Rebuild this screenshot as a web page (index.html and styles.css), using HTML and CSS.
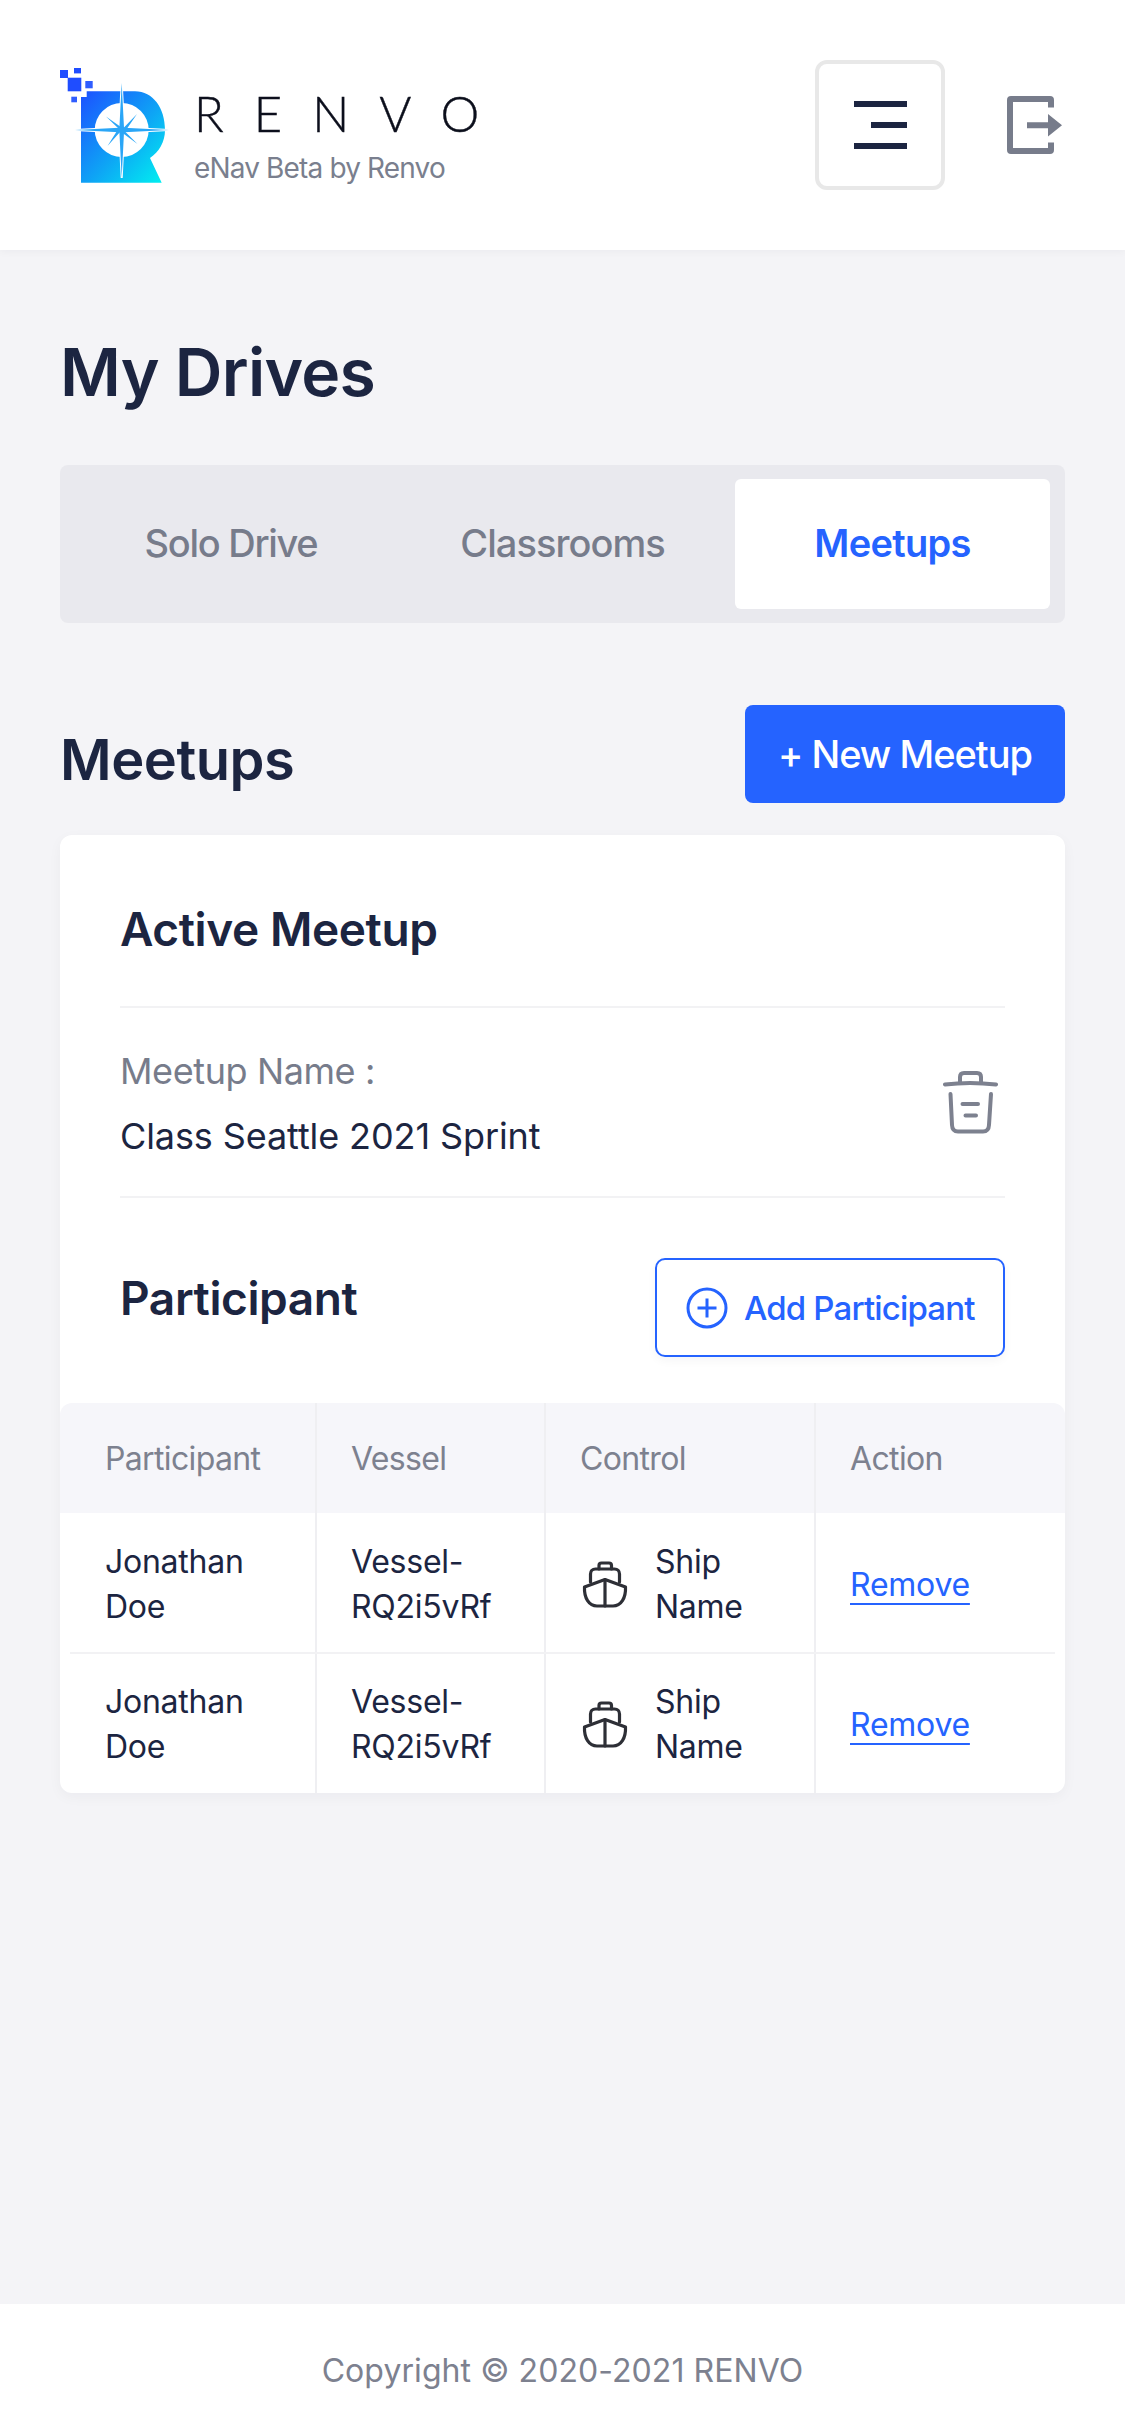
FILE: index.html
```html
<!DOCTYPE html>
<html lang="en">
<head>
<meta charset="utf-8">
<title>My Drives</title>
<link rel="stylesheet" href="styles.css">
</head>
<body>
<header class="topbar">
  <div class="brand">
    <svg class="logo" viewBox="56 64 124 124" aria-hidden="true">
      <defs>
        <linearGradient id="rg" x1="0" y1="0" x2="1" y2="1">
          <stop offset="0" stop-color="#1c50ff"/>
          <stop offset="0.55" stop-color="#0ea5f5"/>
          <stop offset="1" stop-color="#00f2f0"/>
        </linearGradient>
      </defs>
      <g fill="#1f4dff">
        <rect x="60" y="70" width="8" height="8"/>
        <rect x="74" y="68" width="7" height="5.4"/>
        <rect x="67.7" y="77.7" width="13.6" height="13.6"/>
        <rect x="85.3" y="81" width="7.4" height="7.3" fill="#2f5dff"/>
        <rect x="71.3" y="96.7" width="5.7" height="5.6" fill="#2f5dff"/>
      </g>
      <path fill="url(#rg)" d="M81 97H86.7V91.3H135C153 91.3 165 108 165 130C165 142 159 152 150 158L161.7 182.7H81Z"/>
      <circle cx="121.7" cy="130" r="27" fill="#fff"/>
      <path fill="#fff" stroke="#fff" stroke-width="2" d="M121.7 83L124 127.700L169 130L124 132.300L121.700 178L119.400 132.300L75 130L119.400 127.700Z"/>
      <path fill="#2aa6f7" d="M121.7 83L124 127.700L169 130L124 132.300L121.700 178L119.400 132.300L75 130L119.400 127.700Z"/>
      <path fill="#2aa6f7" d="M106 116.500L123 128.500L137 114L125 131.500L137.500 144L120.500 131.500L107.500 146L118.500 128.500Z"/>
    </svg>
    <div class="brand-text">
      <div class="wordmark">RENVO</div>
      <div class="tagline">eNav Beta by Renvo</div>
    </div>
  </div>
  <div class="top-actions">
    <button class="menu-btn" type="button" aria-label="Menu">
      <span class="bar"></span>
      <span class="bar bar-short"></span>
      <span class="bar"></span>
    </button>
    <svg class="logout" viewBox="0 0 55 59" aria-hidden="true">
      <path d="M44 11.500V4a1 1 0 0 0-1-1H4a1 1 0 0 0-1 1V54a1 1 0 0 0 1 1H43a1 1 0 0 0 1-1V46.500" fill="none" stroke="#777c8b" stroke-width="6"/>
      <path d="M20 26.200H41V18L55 29.200L41 40.400V32.200H20Z" fill="#777c8b"/>
    </svg>
  </div>
</header>

<main class="content">
  <h1 class="page-title">My Drives</h1>
  <nav class="tabs">
    <a class="tab tab-solo">Solo Drive</a>
    <a class="tab">Classrooms</a>
    <a class="tab tab-active">Meetups</a>
  </nav>

  <div class="section-head">
    <h2 class="section-title">Meetups</h2>
    <button class="primary-btn" type="button">+ New Meetup</button>
  </div>

  <section class="card">
    <div class="card-body">
      <h3 class="card-title active-title">Active Meetup</h3>
      <div class="meetup-row">
        <div class="meetup-info">
          <div class="meetup-label">Meetup Name :</div>
          <div class="meetup-name">Class Seattle 2021 Sprint</div>
        </div>
        <svg class="trash" viewBox="0 0 56 63" aria-hidden="true">
          <g fill="none" stroke="#7d818f" stroke-width="4" stroke-linecap="round" stroke-linejoin="round">
            <path d="M3 13.500C19 11.500 37 11.500 54 13.500"/>
            <path d="M18 11V6C18 3 19.500 2 22 2H35C37.500 2 39 3 39 6V11"/>
            <path d="M8.500 23L10 54C10.200 58.500 12.500 60.500 16 60.500H41C44.500 60.500 46.800 58.500 47 54L49 23"/>
            <path d="M20.500 33H36M23.500 44.500H34"/>
          </g>
        </svg>
      </div>
      <div class="participant-head">
        <h3 class="card-title">Participant</h3>
        <button class="outline-btn" type="button">
          <svg class="plus" viewBox="0 0 42 42" aria-hidden="true">
            <circle cx="21" cy="21" r="19" fill="none" stroke="#2563ff" stroke-width="3"/>
            <path d="M21 11.500V30.500M11.500 21H30.500" stroke="#2563ff" stroke-width="3"/>
          </svg>
          Add Participant
        </button>
      </div>
    </div>

    <div class="table">
      <div class="t-row t-head">
        <div class="cell">Participant</div>
        <div class="cell">Vessel</div>
        <div class="cell">Control</div>
        <div class="cell">Action</div>
      </div>
      <div class="t-row t-data">
        <div class="cell">Jonathan<br>Doe</div>
        <div class="cell">Vessel-<br>RQ2i5vRf</div>
        <div class="cell control">
          <svg class="ship" viewBox="0 0 46 47" aria-hidden="true">
            <g fill="none" stroke="#2d2f36" stroke-width="3.200" stroke-linecap="round" stroke-linejoin="round">
              <path d="M17 8V4.500C17 3 18 2 19.500 2H27C28.500 2 29.500 3 29.500 4.500V8"/>
              <path d="M8.500 21V13C8.500 10 10.500 8 13.500 8H32.500C35.500 8 37.500 10 37.500 13V21"/>
              <path d="M2.500 26C2 37 7 45 15 45H31C39 45 44 37 43.500 26L23 18.500Z"/>
              <path d="M23 18.500V45"/>
            </g>
          </svg>
          <span>Ship<br>Name</span>
        </div>
        <div class="cell"><a class="link">Remove</a></div>
      </div>
      <div class="t-row t-data">
        <div class="cell">Jonathan<br>Doe</div>
        <div class="cell">Vessel-<br>RQ2i5vRf</div>
        <div class="cell control">
          <svg class="ship" viewBox="0 0 46 47" aria-hidden="true">
            <g fill="none" stroke="#2d2f36" stroke-width="3.200" stroke-linecap="round" stroke-linejoin="round">
              <path d="M17 8V4.500C17 3 18 2 19.500 2H27C28.500 2 29.500 3 29.500 4.500V8"/>
              <path d="M8.500 21V13C8.500 10 10.500 8 13.500 8H32.500C35.500 8 37.500 10 37.500 13V21"/>
              <path d="M2.500 26C2 37 7 45 15 45H31C39 45 44 37 43.500 26L23 18.500Z"/>
              <path d="M23 18.500V45"/>
            </g>
          </svg>
          <span>Ship<br>Name</span>
        </div>
        <div class="cell"><a class="link">Remove</a></div>
      </div>
    </div>
  </section>
</main>

<footer class="footer">Copyright © 2020-2021 RENVO</footer>
</body>
</html>
```
FILE: styles.css
```css
* { box-sizing: border-box; }
html, body { margin: 0; padding: 0; }
body {
  width: 1125px;
  min-height: 2436px;
  display: flex;
  flex-direction: column;
  background: #f4f4f7;
  color: #1c2541;
  font-family: "Inter", "Liberation Sans", sans-serif;
}
.topbar {
  height: 250px;
  background: #fff;
  padding: 60px 60px 0 56px;
  display: flex;
  justify-content: space-between;
  align-items: flex-start;
  box-shadow: 0 2px 8px rgba(30, 35, 60, 0.04);
}
.brand { display: flex; align-items: flex-start; }
.logo { width: 124px; height: 124px; margin-top: 4px; flex: none; }
.brand-text { margin-left: 14px; padding-top: 25px; }
.wordmark {
  font-family: "Lato", sans-serif;
  font-weight: 300;
  font-size: 49px;
  line-height: 56px;
  letter-spacing: 30px;
  color: #0c0f1c;
  white-space: nowrap;
  -webkit-text-stroke: 0.4px #0c0f1c;
}
.tagline {
  font-size: 28px;
  line-height: 34px;
  letter-spacing: -0.85px;
  color: #7a7f8e;
  margin-top: 10px;
  white-space: nowrap;
}
.top-actions { display: flex; align-items: center; gap: 62px; }
.menu-btn {
  width: 130px;
  height: 130px;
  background: #fff;
  border: 4px solid #e8e8e8;
  border-radius: 12px;
  padding: 0 34px;
  display: flex;
  flex-direction: column;
  align-items: flex-end;
  justify-content: center;
  gap: 14.500px;
}
.bar { display: block; width: 53px; height: 6.500px; background: #1c2541; }
.bar-short { width: 36px; }
.logout { width: 55px; height: 59px; margin-right: 3px; }

.content { flex: 1; padding: 0 60px; }
.page-title {
  margin: 86px 0 0;
  font-size: 66px;
  line-height: 72px;
  font-weight: 600;
  letter-spacing: -0.7px;
}
.tabs {
  margin-top: 57px;
  height: 158px;
  background: #e9e9ee;
  border-radius: 8px;
  padding: 14px 15px;
  display: grid;
  grid-template-columns: repeat(3, 315px);
  column-gap: 15px;
  align-items: stretch;
}
.tab {
  display: flex;
  align-items: center;
  justify-content: center;
  font-size: 38px;
  font-weight: 500;
  letter-spacing: -0.95px;
  color: #777c8b;
  padding-bottom: 2px;
}
.tab-solo { letter-spacing: -1.3px; padding-right: 3px; }
.tab-active { background: #fff; border-radius: 6px; color: #2563ff; font-weight: 600; letter-spacing: -0.7px; }

.section-head {
  margin-top: 82px;
  display: flex;
  justify-content: space-between;
  align-items: center;
}
.section-title { margin: 0; font-size: 56px; line-height: 98px; font-weight: 600; letter-spacing: -0.5px; padding-top: 6px; height: 98px; }
.primary-btn {
  width: 320px;
  height: 98px;
  background: #2563ff;
  color: #fff;
  border: 0;
  border-radius: 8px;
  font: 500 38px "Inter", sans-serif;
  letter-spacing: -1px;
  padding: 0;
}

.card {
  margin-top: 32px;
  background: #fff;
  border-radius: 12px;
  box-shadow: 0 4px 14px rgba(30, 35, 60, 0.04);
  overflow: hidden;
}
.card-body { padding: 0 60px; }
.card-title { margin: 0; font-size: 46px; line-height: 56px; font-weight: 600; letter-spacing: -0.4px; }
.active-title { padding: 66px 0 49px; height: 173px; border-bottom: 2px solid #f2f2f4; line-height: 56px; }
.meetup-row {
  height: 190px;
  border-bottom: 2px solid #f2f2f4;
  display: flex;
  justify-content: space-between;
  align-items: center;
  padding-right: 7px;
}
.meetup-info { padding-top: 3px; }
.meetup-label { font-size: 36px; line-height: 44px; color: #777c8b; letter-spacing: -0.4px; }
.meetup-name { font-size: 36px; line-height: 44px; margin-top: 21px; letter-spacing: -0.1px; }
.trash { width: 56px; height: 63px; }
.participant-head {
  height: 205px;
  display: flex;
  justify-content: space-between;
  align-items: flex-start;
}
.participant-head .card-title { margin-top: 72px; }
.outline-btn {
  margin-top: 60px;
  width: 350px;
  height: 99px;
  background: #fff;
  border: 2.500px solid #2563ff;
  border-radius: 10px;
  display: flex;
  align-items: center;
  padding: 0 0 0 29px;
  gap: 16px;
  color: #2563ff;
  font: 500 33px "Inter", sans-serif;
  letter-spacing: -0.85px;
  white-space: nowrap;
  box-shadow: 0 4px 10px rgba(30, 35, 60, 0.04);
}
.plus { width: 42px; height: 42px; flex: none; }

.t-row { display: grid; grid-template-columns: 255px 229px 270px 251px; position: relative; }
.t-head { height: 110px; background: #f6f6fa; border-radius: 12px 12px 0 0; color: #7d818f; }
.t-head .cell { letter-spacing: -0.65px; }
.t-data { height: 140px; }
.t-data .cell { padding-top: 2px; }
.t-data + .t-data::before {
  content: "";
  position: absolute;
  left: 10px;
  right: 10px;
  top: -1px;
  height: 2px;
  background: #f2f2f4;
}
.cell {
  padding: 0 0 0 34px;
  font-size: 32px;
  line-height: 45px;
  letter-spacing: -0.25px;
  display: flex;
  align-items: center;
  border-left: 2px solid #efeff2;
}
.cell:first-child { border-left: 0; padding-left: 45px; }
.control { gap: 27px; }
.ship { width: 46px; height: 47px; flex: none; margin-left: 2px; }
.link { color: #2563ff; text-decoration: underline; text-underline-offset: 7px; text-decoration-thickness: 2px; }

.footer {
  height: 132px;
  background: #fff;
  display: flex;
  align-items: center;
  justify-content: center;
  font-size: 32px;
  color: #7d818f;
  letter-spacing: 0.07px;
}
```
